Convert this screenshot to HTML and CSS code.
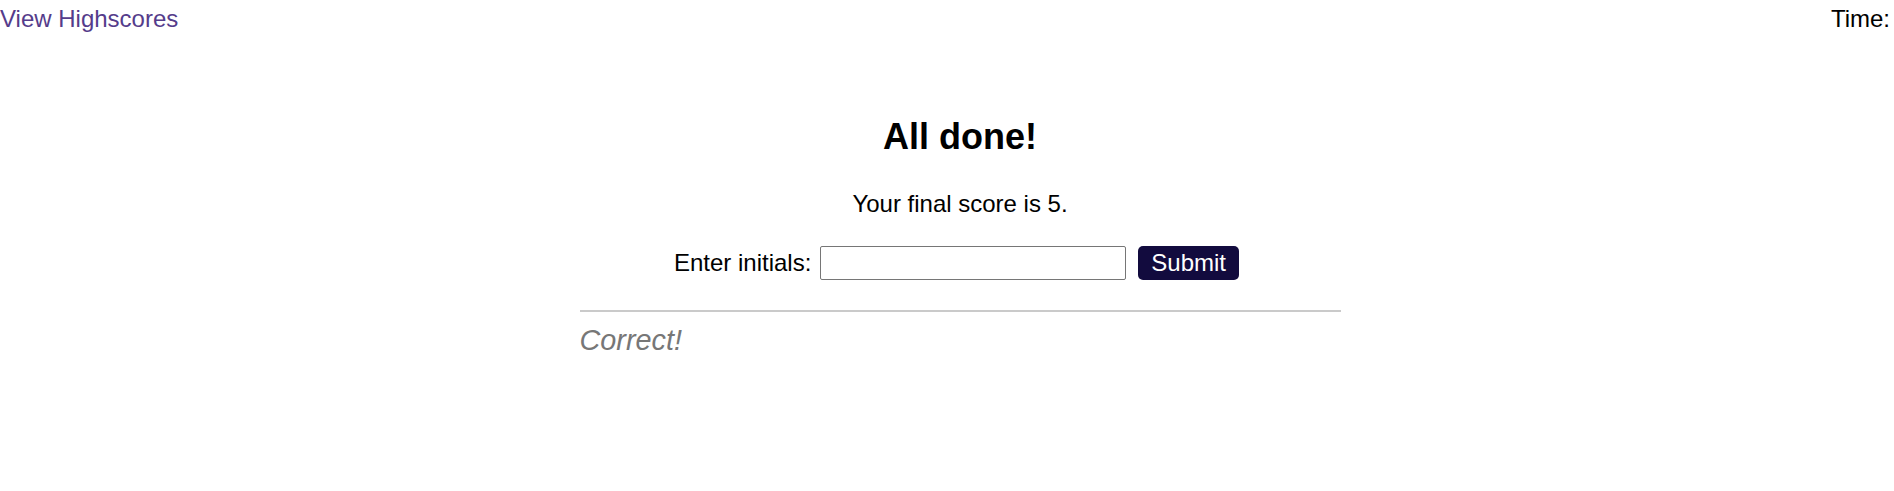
FILE: index.html
```html
<!DOCTYPE html>
<html lang="en">
<head>
<meta charset="utf-8">
<title>Quiz</title>
<link rel="stylesheet" href="styles.css">
</head>
<body>
  <header class="topbar">
    <a class="highscores-link" href="#">View Highscores</a>
    <div class="timer">Time: <span class="time-value"></span></div>
  </header>
  <div class="stage">
    <main class="quiz">
      <h1 class="title">All done!</h1>
      <p class="score">Your final score is 5.</p>
      <form class="initials-form">
        <label class="initials-label" for="initials">Enter initials:</label>
        <input class="initials-input" id="initials" type="text">
        <button class="submit-btn" type="button">Submit</button>
      </form>
      <div class="feedback">
        <p class="feedback-text">Correct!</p>
      </div>
    </main>
  </div>
</body>
</html>
```
FILE: styles.css
```css
html, body {
  margin: 0;
  padding: 0;
  background: #ffffff;
}

body {
  font-family: "Liberation Sans", Arial, sans-serif;
  font-size: 24px;
  color: #000000;
}

.topbar {
  display: flex;
  justify-content: space-between;
  align-items: flex-start;
  padding: 5px 4px 0 0;
  height: 27px;
}

.highscores-link {
  color: #553c8b;
  text-decoration: none;
}

.timer {
  color: #000000;
}

.stage {
  padding-left: 26px;
}

.quiz {
  width: 761px;
  margin: 0 auto;
  display: flex;
  flex-direction: column;
}

.title {
  margin: 84px 0 0 0;
  font-size: 36px;
  font-weight: bold;
  text-align: center;
  line-height: 41px;
}

.score {
  margin: 33px 0 0 0;
  text-align: center;
}

.initials-form {
  margin: 28px 0 0 0;
  display: flex;
  justify-content: center;
  align-items: center;
  padding-right: 7px;
}

.initials-label {
  margin-right: 9px;
}

.initials-input {
  box-sizing: border-box;
  width: 306px;
  height: 34px;
  border: 1px solid #767676;
  border-radius: 2px;
  margin: 0 12px 0 0;
  padding: 0 4px;
  font-family: inherit;
  font-size: 20px;
}

.submit-btn {
  font-family: inherit;
  font-size: 24px;
  color: #ffffff;
  background: #120b3e;
  border: none;
  border-radius: 5px;
  padding: 3px 13px;
  margin: 0;
  line-height: normal;
  cursor: pointer;
}

.feedback {
  margin-top: 30px;
  border-top: 2px solid #cacaca;
}

.feedback-text {
  margin: 12px 0 0 0;
  font-size: 28.8px;
  font-style: italic;
  color: #777777;
}
```
